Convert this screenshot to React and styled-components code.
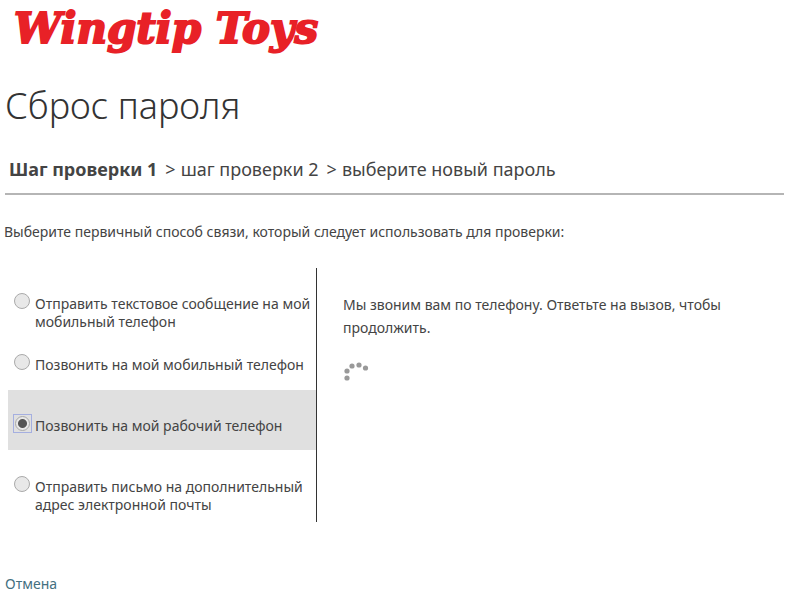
import React, { useState } from "react";
import styled, { createGlobalStyle } from "styled-components";

const GlobalStyle = createGlobalStyle`
  * { box-sizing: border-box; }
  body {
    margin: 0;
    background: #fff;
    color: #444;
    font: 14px/18px "Noto Sans", "Open Sans", sans-serif;
  }
`;

const Page = styled.main`
  padding: 4px 16px 4px 4px;
`;

const Logo = styled.div`
  padding-left: 10px;
  color: #e82127;
  font: italic 700 42px/50px "DejaVu Serif", serif;
  -webkit-text-stroke: 2px #e82127;
  white-space: nowrap;
`;

const Title = styled.h1`
  margin: 26px 0 0 1px;
  color: #333;
  font-size: 36px;
  line-height: 52px;
  font-weight: 300;
`;

const Steps = styled.ol`
  display: flex;
  flex-wrap: wrap;
  gap: 8px;
  list-style: none;
  margin: 16px 0 0 1px;
  padding: 9px 4px 12px;
  border-bottom: 2px solid #b5b5b5;
  font-size: 18px;
  line-height: 24px;
`;

const Step = styled.li`
  display: flex;
  gap: 5px;
  font-weight: ${({ $current }) => ($current ? 700 : 400)};
`;

const Prompt = styled.p`
  margin: 28px 0 0;
`;

const Panels = styled.div`
  display: flex;
  margin: 27px 0 0 4px;
`;

const Methods = styled.fieldset`
  flex: 0 0 309px;
  min-width: 0;
  margin: 0;
  padding: 0 0 10px;
  border: 0;
  border-right: 1px solid #333;
`;

const Method = styled.label`
  display: flex;
  align-items: flex-start;
  gap: 4px;
  height: 60px;
  margin-bottom: 1px;
  padding: 25px 0 0 6px;
  background: ${({ $selected }) => ($selected ? "#e0e0e0" : "transparent")};
`;

const MethodText = styled.span`
  padding-top: 2px;
`;

const RadioFrame = styled.span`
  display: flex;
  flex: none;
  width: 17px;
  height: 17px;
  outline: ${({ $selected }) => ($selected ? "1px solid #a5afe0" : "none")};
`;

const Radio = styled.input`
  appearance: none;
  flex: none;
  width: 16px;
  height: 16px;
  margin: 0;
  border: 1px solid #aaa;
  border-radius: 50%;
  background: #e8e8e8;
  &:checked {
    width: 15px;
    height: 15px;
    margin: 1px;
    background: radial-gradient(circle, #555 0 4px, #e8e8e8 5px);
  }
  &:focus {
    outline: none;
  }
`;

const Status = styled.section`
  flex: 1;
  padding: 25px 20px 0 26px;
  line-height: 23px;
`;

const Message = styled.p`
  max-width: 400px;
  margin: 0;
`;

const Spinner = styled.svg`
  display: block;
  margin-top: 21px;
`;

const Cancel = styled.a`
  display: inline-block;
  margin: 53px 0 0 1px;
  color: #44707f;
  text-decoration: none;
`;

const steps = ["Шаг проверки 1", "шаг проверки 2", "выберите новый пароль"];

const methods = [
  "Отправить текстовое сообщение на мой мобильный телефон",
  "Позвонить на мой мобильный телефон",
  "Позвонить на мой рабочий телефон",
  "Отправить письмо на дополнительный адрес электронной почты",
];

export default function App() {
  const [selected, setSelected] = useState(2);
  return (
    <Page>
      <GlobalStyle />
      <Logo>Wingtip Toys</Logo>
      <Title>Сброс пароля</Title>
      <Steps>
        {steps.map((step, i) => (
          <Step key={step} $current={i === 0}>
            {i > 0 && <span>&gt;</span>}
            <span>{step}</span>
          </Step>
        ))}
      </Steps>
      <Prompt id="prompt">
        Выберите первичный способ связи, который следует использовать для проверки:
      </Prompt>
      <Panels>
        <Methods aria-labelledby="prompt">
          {methods.map((method, i) => (
            <Method key={method} $selected={i === selected}>
              <RadioFrame $selected={i === selected}>
                <Radio
                  type="radio"
                  name="method"
                  checked={i === selected}
                  onChange={() => setSelected(i)}
                />
              </RadioFrame>
              <MethodText>{method}</MethodText>
            </Method>
          ))}
        </Methods>
        <Status>
          <Message>Мы звоним вам по телефону. Ответьте на вызов, чтобы продолжить.</Message>
          <Spinner width="28" height="24" fill="#999" aria-label="Загрузка">
            <circle cx="4" cy="18" r="2.6" />
            <circle cx="4" cy="11" r="2.6" />
            <circle cx="9" cy="6" r="2.6" />
            <circle cx="16" cy="5" r="2.6" />
            <circle cx="22.5" cy="8" r="2.6" />
          </Spinner>
        </Status>
      </Panels>
      <Cancel href="#cancel">Отмена</Cancel>
    </Page>
  );
}
